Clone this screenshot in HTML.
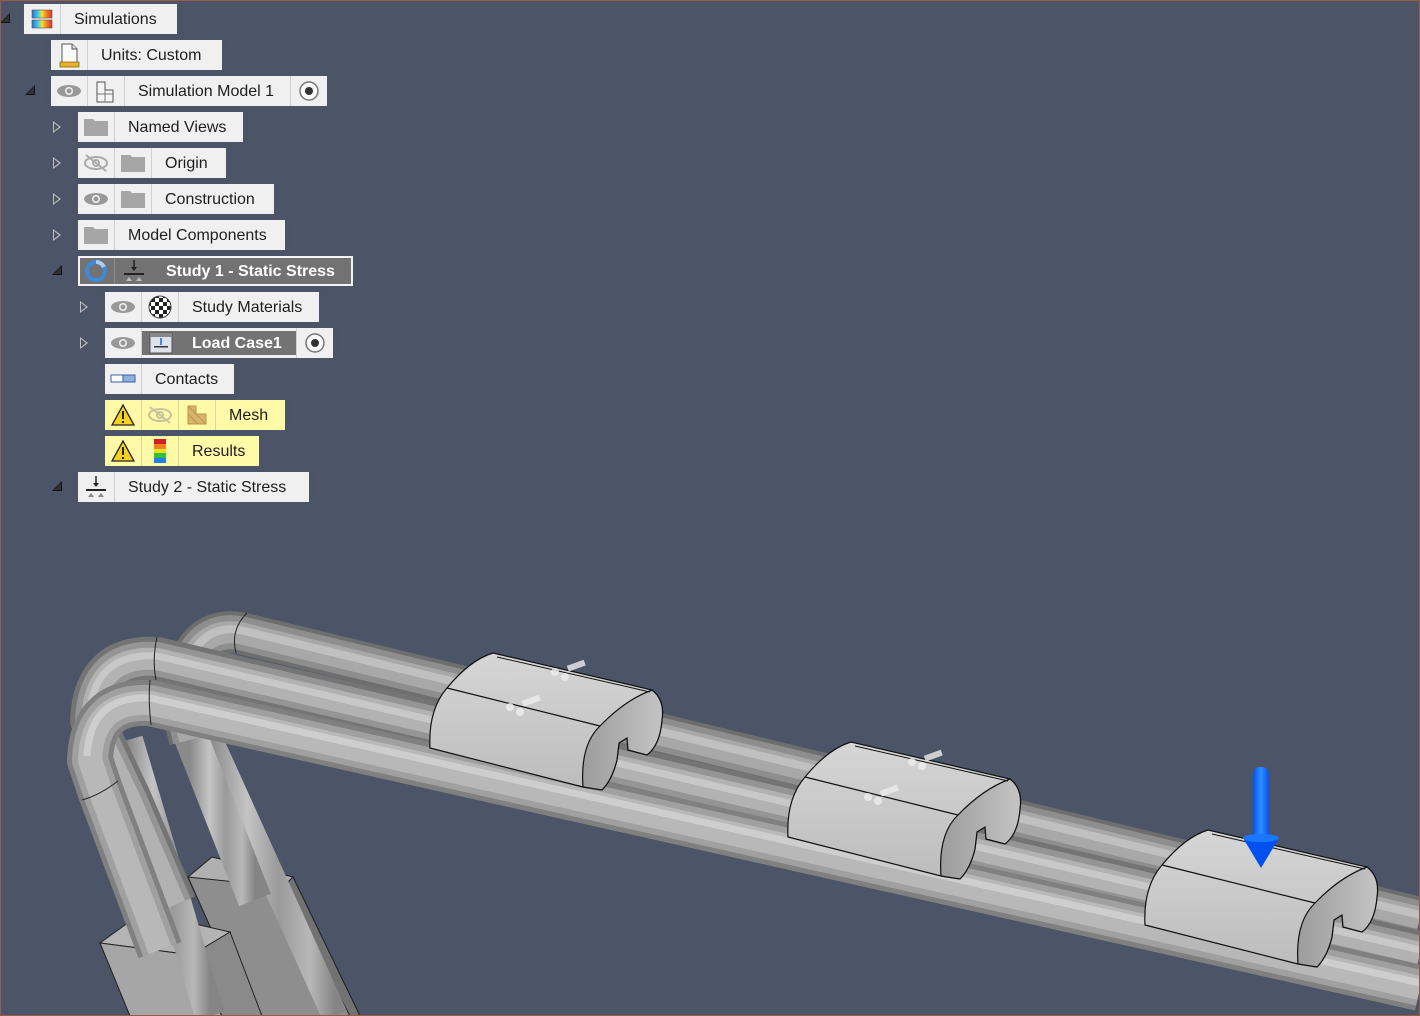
<!DOCTYPE html>
<html><head><meta charset="utf-8"><style>
html,body{margin:0;padding:0}
body{width:1420px;height:1016px;background:#4b5567;position:relative;overflow:hidden;font-family:"Liberation Sans",Arial,sans-serif}
.frame{position:absolute;left:0;top:0;width:1418px;height:1014px;border:1px solid #9a5a4a;pointer-events:none;z-index:10}
.bg{position:absolute;left:0;top:0}
.row{position:absolute;height:30px;background:#f0f0f0;display:flex;align-items:center;font-size:16px;color:#1e1e1e;box-shadow:0 0 3px rgba(80,90,105,.6)}
.cell{width:37px;height:30px;border-right:1px solid #d0d0d0;box-sizing:border-box;display:flex;align-items:center;justify-content:center;flex:none}
.txt{padding:2px 13px 0;white-space:nowrap}
.yel{background:#fffaa8}
.yel .cell{border-right-color:#ddd79a}
.tri{position:absolute;width:0;height:0;border-top:6px solid transparent;border-bottom:6px solid transparent;border-left:8px solid #bdbdbd}
.tri:after{content:"";position:absolute;left:-7px;top:-4px;border-top:4px solid transparent;border-bottom:4px solid transparent;border-left:5px solid #4b5567}
.exp{position:absolute;width:0;height:0;border-left:10px solid transparent;border-bottom:10px solid #111}
.exp:after{content:"";position:absolute;left:-8px;top:2px;border-left:7px solid transparent;border-bottom:7px solid #333}
</style></head><body>
<svg class="bg" width="1420" height="1016" viewBox="0 0 1420 1016">
<defs>
<linearGradient id="gl" x1="0" y1="0" x2="1" y2="0">
<stop offset="0" stop-color="#8a8a8a"/><stop offset=".3" stop-color="#c4c4c4"/><stop offset=".55" stop-color="#9a9a9a"/><stop offset=".8" stop-color="#b8b8b8"/><stop offset="1" stop-color="#858585"/></linearGradient>
<linearGradient id="gc" x1="0" y1="0" x2="0" y2="1"><stop offset="0" stop-color="#d6d6d6"/><stop offset="1" stop-color="#bcbcbc"/></linearGradient>
<linearGradient id="gcap" x1="0" y1="0" x2="1" y2="0"><stop offset="0" stop-color="#9c9c9c"/><stop offset="1" stop-color="#c4c4c4"/></linearGradient>
<linearGradient id="gb" x1="0" y1="0" x2="1" y2="0"><stop offset="0" stop-color="#0a50f0"/><stop offset=".5" stop-color="#2a90ff"/><stop offset="1" stop-color="#0a50f0"/></linearGradient>
<linearGradient id="sim" x1="0" y1="0" x2="1" y2="0"><stop offset="0" stop-color="#2a6ee0"/><stop offset=".3" stop-color="#40d0e0"/><stop offset=".5" stop-color="#f5e030"/><stop offset=".75" stop-color="#f07a20"/><stop offset="1" stop-color="#e03030"/></linearGradient>
</defs>
<!-- boxes at bottom -->
<polygon points="212,857 293,877 360,1016 250,1016 188,877" fill="#8e8e8e" stroke="#222" stroke-width="1"/>
<polygon points="188,877 212,857 293,877 283,887" fill="#b0b0b0" stroke="#222" stroke-width="1"/>
<polygon points="283,887 293,877 360,1016 350,1016" fill="#727272" stroke="#222" stroke-width="1"/>
<polygon points="100,943 143,912 230,932 192,955" fill="#b4b4b4" stroke="#222" stroke-width="1"/>
<polygon points="100,943 192,955 222,1016 130,1016" fill="#a6a6a6" stroke="#222" stroke-width="1"/>
<polygon points="192,955 230,932 262,1016 222,1016" fill="#8a8a8a" stroke="#222" stroke-width="1"/>
<!-- legs -->
<line x1="210" y1="740" x2="335" y2="1016" stroke="url(#gl)" stroke-width="26"/>
<line x1="190" y1="735" x2="255" y2="900" stroke="url(#gl)" stroke-width="34"/>
<line x1="128" y1="740" x2="210" y2="1016" stroke="url(#gl)" stroke-width="30"/>
<!-- P1 back -->
<g fill="none" stroke-linejoin="round">
<path d="M1420,918 L240,633 Q190,625 180,700 L190,740" stroke="#6e6e6e" stroke-width="42"/>
<path d="M1420,918 L240,633 Q190,625 180,700 L190,740" stroke="#8e8e8e" stroke-width="34"/>
<path d="M1420,918 L240,633 Q190,625 180,700 L190,740" stroke="#a8a8a8" stroke-width="22"/>
<path d="M1420,915 L240,630 Q190,622 177,700" stroke="#c0c0c0" stroke-width="8"/>
<!-- P2 -->
<path d="M1420,953 L157,659 Q95,655 92,720 L130,800 L175,905" stroke="#747474" stroke-width="44"/>
<path d="M1420,953 L157,659 Q95,655 92,720 L130,800 L175,905" stroke="#959595" stroke-width="34"/>
<path d="M1420,953 L157,659 Q95,655 92,720 L130,800 L175,905" stroke="#b2b2b2" stroke-width="22"/>
<path d="M1420,950 L157,656 Q92,652 89,720" stroke="#c8c8c8" stroke-width="7"/>
<!-- P3 front -->
<path d="M1420,988 L150,703 Q92,700 90,760 L100,790 L160,950" stroke="#808080" stroke-width="46"/>
<path d="M1420,988 L150,703 Q92,700 90,760 L100,790 L160,950" stroke="#a0a0a0" stroke-width="36"/>
<path d="M1420,988 L150,703 Q92,700 90,760 L100,790 L160,950" stroke="#b8b8b8" stroke-width="24"/>
<path d="M1420,983 L150,698 Q90,695 87,756" stroke="#cecece" stroke-width="7"/>
</g>
<path d="M150,680 Q148,700 151,725" fill="none" stroke="#222" stroke-width="1"/>
<path d="M157,637 Q152,660 156,680" fill="none" stroke="#222" stroke-width="1"/>
<path d="M247,613 Q230,630 236,653" fill="none" stroke="#222" stroke-width="1"/>
<path d="M82,800 Q100,795 118,781" fill="none" stroke="#222" stroke-width="1"/>
<!-- clips -->
<g id="clip">
<path d="M447,688 Q470,660 493,653 L652,690 Q665,700 662,720 Q660,745 647,755 L628,750 L627,738 L619,743 L617,760 Q612,780 602,790 L583,787 L430,748 Q428,710 447,688 Z" fill="url(#gc)" stroke="#111" stroke-width="1.2"/>
<path d="M600,726 Q625,700 652,690 Q665,700 662,720 Q660,745 647,755 L628,750 L627,738 L619,743 L617,760 Q612,780 602,790 L583,787 Q580,745 600,726 Z" fill="url(#gcap)" stroke="#111" stroke-width="1.2"/>
<line x1="447" y1="688" x2="600" y2="726" stroke="#111" stroke-width="1.2"/>
<line x1="497" y1="657" x2="650" y2="692" stroke="#111" stroke-width="1"/>
</g>
<g transform="translate(358,89)"><use href="#clip"/></g>
<g transform="translate(715,177)"><use href="#clip"/></g>
<g fill="#eeeeee" opacity=".8">
<circle cx="510" cy="707" r="4"/><circle cx="520" cy="712" r="4"/><rect x="522" y="698" width="18" height="6" transform="rotate(-20 530 700)"/>
<circle cx="555" cy="672" r="4"/><circle cx="565" cy="677" r="4"/><rect x="567" y="663" width="18" height="6" transform="rotate(-20 575 665)"/>
<circle cx="868" cy="797" r="4"/><circle cx="878" cy="801" r="4"/><rect x="880" y="788" width="18" height="6" transform="rotate(-20 888 790)"/>
<circle cx="912" cy="762" r="4"/><circle cx="922" cy="766" r="4"/><rect x="924" y="753" width="18" height="6" transform="rotate(-20 932 755)"/>
</g>
<!-- arrow -->
<rect x="1253" y="767" width="16" height="74" rx="7" fill="url(#gb)"/>
<polygon points="1243,838 1279,838 1261,868" fill="#0050f0"/>
<ellipse cx="1261" cy="838" rx="18" ry="4" fill="#1a78ff"/>
</svg>

<div class="exp" style="left:0;top:13px"></div>
<div class="exp" style="left:25px;top:85px"></div>
<div class="exp" style="left:52px;top:265px"></div>
<div class="exp" style="left:52px;top:481px"></div>
<div class="tri" style="left:53px;top:121px"></div>
<div class="tri" style="left:53px;top:157px"></div>
<div class="tri" style="left:53px;top:193px"></div>
<div class="tri" style="left:53px;top:229px"></div>
<div class="tri" style="left:80px;top:301px"></div>
<div class="tri" style="left:80px;top:337px"></div>

<div class="row" style="left:24px;top:4px;width:153px"><div class="cell"><svg width="22" height="20"><rect x="1" y="1" width="20" height="8" fill="url(#sim)" stroke="#555" stroke-width=".6"/><rect x="1" y="11" width="20" height="8" fill="url(#sim)" stroke="#555" stroke-width=".6"/></svg></div><div class="txt">Simulations</div></div>

<div class="row" style="left:51px;top:40px;width:171px"><div class="cell"><svg width="24" height="26"><path d="M5 2h10l5 5v15H5z" fill="#fafafa" stroke="#555"/><path d="M15 2v5h5" fill="#ddd" stroke="#555"/><rect x="3" y="20" width="19" height="5" fill="#e5b22a" stroke="#8a6a10" stroke-width=".8"/></svg></div><div class="txt">Units: Custom</div></div>

<div class="row" style="left:51px;top:76px;width:276px"><div class="cell"><svg width="26" height="14"><ellipse cx="13" cy="7" rx="12" ry="6" fill="#999"/><circle cx="13" cy="7" r="4" fill="#f0f0f0"/><circle cx="13" cy="7" r="2.5" fill="#999"/></svg></div><div class="cell"><svg width="26" height="26"><path d="M4 4h8v8h8v12H4z" fill="#f4f4f4" stroke="#555"/><line x1="4" y1="16" x2="20" y2="16" stroke="#777"/><line x1="12" y1="12" x2="12" y2="24" stroke="#777"/></svg></div><div class="txt" style="flex:1;padding-left:13px">Simulation Model 1</div><div class="cell" style="border-right:0;border-left:1px solid #d0d0d0"><svg width="22" height="22"><circle cx="11" cy="11" r="9" fill="#fafafa" stroke="#777" stroke-width="1.5"/><circle cx="11" cy="11" r="4" fill="#333"/></svg></div></div>

<div class="row" style="left:78px;top:112px;width:165px"><div class="cell"><svg width="26" height="20"><path d="M1 2h9l2 2h13v15H1z" fill="#a6a6a6"/></svg></div><div class="txt">Named Views</div></div>

<div class="row" style="left:78px;top:148px;width:148px"><div class="cell"><svg width="26" height="18"><ellipse cx="13" cy="9" rx="11" ry="6" fill="none" stroke="#aaa" stroke-width="2"/><circle cx="13" cy="9" r="3" fill="none" stroke="#aaa" stroke-width="2"/><line x1="3" y1="1" x2="23" y2="17" stroke="#aaa" stroke-width="2"/></svg></div><div class="cell"><svg width="26" height="20"><path d="M1 2h9l2 2h13v15H1z" fill="#a6a6a6"/></svg></div><div class="txt">Origin</div></div>

<div class="row" style="left:78px;top:184px;width:196px"><div class="cell"><svg width="26" height="14"><ellipse cx="13" cy="7" rx="12" ry="6" fill="#999"/><circle cx="13" cy="7" r="4" fill="#f0f0f0"/><circle cx="13" cy="7" r="2.5" fill="#999"/></svg></div><div class="cell"><svg width="26" height="20"><path d="M1 2h9l2 2h13v15H1z" fill="#a6a6a6"/></svg></div><div class="txt">Construction</div></div>

<div class="row" style="left:78px;top:220px;width:207px"><div class="cell"><svg width="26" height="20"><path d="M1 2h9l2 2h13v15H1z" fill="#a6a6a6"/></svg></div><div class="txt">Model Components</div></div>

<div class="row" style="left:78px;top:256px;width:275px;background:#727272;outline:2px solid #f4f4f4;outline-offset:-2px;color:#fff;font-weight:bold"><div class="cell" style="border-right-color:#8a8a8a"><svg width="26" height="26"><circle cx="13" cy="13" r="9" fill="none" stroke="#3d8ad8" stroke-width="4"/><path d="M13 4a9 9 0 0 1 8 5" fill="none" stroke="#a8cdf0" stroke-width="4"/></svg></div><div class="cell" style="border-right:0"><svg width="26" height="26"><line x1="13" y1="2" x2="13" y2="12" stroke="#222" stroke-width="1.5"/><path d="M10 9l3 4 3-4" fill="#222"/><rect x="3" y="15" width="20" height="2" fill="#222"/><path d="M5 23l3-4 3 4zM15 23l3-4 3 4z" fill="#bbb"/></svg></div><div class="txt" style="padding-left:14px">Study 1 - Static Stress</div></div>

<div class="row" style="left:105px;top:292px;width:214px"><div class="cell"><svg width="26" height="14"><ellipse cx="13" cy="7" rx="12" ry="6" fill="#999"/><circle cx="13" cy="7" r="4" fill="#f0f0f0"/><circle cx="13" cy="7" r="2.5" fill="#999"/></svg></div><div class="cell"><svg width="26" height="26" viewBox="0 0 26 26"><defs><pattern id="ck" width="8" height="8" patternUnits="userSpaceOnUse"><rect width="8" height="8" fill="#fff"/><rect width="4" height="4" fill="#222"/><rect x="4" y="4" width="4" height="4" fill="#222"/></pattern></defs><circle cx="13" cy="13" r="11" fill="url(#ck)" stroke="#444"/></svg></div><div class="txt">Study Materials</div></div>

<div class="row" style="left:105px;top:328px;width:228px"><div class="cell"><svg width="26" height="14"><ellipse cx="13" cy="7" rx="12" ry="6" fill="#999"/><circle cx="13" cy="7" r="4" fill="#f0f0f0"/><circle cx="13" cy="7" r="2.5" fill="#999"/></svg></div><div style="background:#737373;height:24px;width:154px;display:flex;align-items:center;color:#fff;font-weight:bold"><div style="width:37px;display:flex;justify-content:center"><svg width="24" height="22"><rect x="1" y="1" width="22" height="20" fill="#dde2ea" stroke="#555"/><rect x="1" y="1" width="22" height="4" fill="#888"/><line x1="12" y1="6" x2="12" y2="13" stroke="#1a66d0" stroke-width="1.5"/><rect x="5" y="14" width="14" height="1.5" fill="#333"/></svg></div><div style="padding:2px 0 0 13px">Load Case1</div></div><div class="cell" style="border-right:0;border-left:1px solid #d0d0d0"><svg width="22" height="22"><circle cx="11" cy="11" r="9" fill="#fafafa" stroke="#777" stroke-width="1.5"/><circle cx="11" cy="11" r="4" fill="#333"/></svg></div></div>

<div class="row" style="left:105px;top:364px;width:129px"><div class="cell"><svg width="26" height="10"><rect x="1" y="1" width="24" height="7" fill="#fff" stroke="#3a5f9a"/><rect x="13" y="1" width="12" height="7" fill="#8eb0e0" stroke="#3a5f9a"/></svg></div><div class="txt">Contacts</div></div>

<div class="row yel" style="left:105px;top:400px;width:180px"><div class="cell"><svg width="26" height="24"><path d="M13 2L24 22H2z" fill="#f6d21e" stroke="#222" stroke-width="1.3"/><rect x="12" y="8" width="2" height="8" fill="#222"/><rect x="12" y="18" width="2" height="2" fill="#222"/></svg></div><div class="cell"><svg width="26" height="18"><ellipse cx="13" cy="9" rx="11" ry="6" fill="none" stroke="#c8c29a" stroke-width="2"/><circle cx="13" cy="9" r="3" fill="none" stroke="#c8c29a" stroke-width="2"/><line x1="3" y1="1" x2="23" y2="17" stroke="#c8c29a" stroke-width="2"/></svg></div><div class="cell"><svg width="22" height="22"><path d="M2 2h8v8h10v10H2z" fill="#d9b46a" stroke="#b8944c"/><path d="M2 2l8 8M2 10l10 10M10 10l10 10" stroke="#b8944c"/></svg></div><div class="txt">Mesh</div></div>

<div class="row yel" style="left:105px;top:436px;width:154px"><div class="cell"><svg width="26" height="24"><path d="M13 2L24 22H2z" fill="#f6d21e" stroke="#222" stroke-width="1.3"/><rect x="12" y="8" width="2" height="8" fill="#222"/><rect x="12" y="18" width="2" height="2" fill="#222"/></svg></div><div class="cell"><svg width="12" height="24"><rect x="0" y="0" width="12" height="5" fill="#d02020"/><rect x="0" y="5" width="12" height="5" fill="#f08020"/><rect x="0" y="10" width="12" height="4" fill="#f0e020"/><rect x="0" y="14" width="12" height="5" fill="#30c040"/><rect x="0" y="19" width="12" height="5" fill="#2080f0"/></svg></div><div class="txt">Results</div></div>

<div class="row" style="left:78px;top:472px;width:231px"><div class="cell"><svg width="26" height="26"><line x1="13" y1="2" x2="13" y2="12" stroke="#222" stroke-width="1.5"/><path d="M10 9l3 4 3-4" fill="#222"/><rect x="3" y="15" width="20" height="2" fill="#222"/><path d="M5 23l3-4 3 4zM15 23l3-4 3 4z" fill="#888"/></svg></div><div class="txt">Study 2 - Static Stress</div></div>

<div class="frame"></div>
</body></html>
